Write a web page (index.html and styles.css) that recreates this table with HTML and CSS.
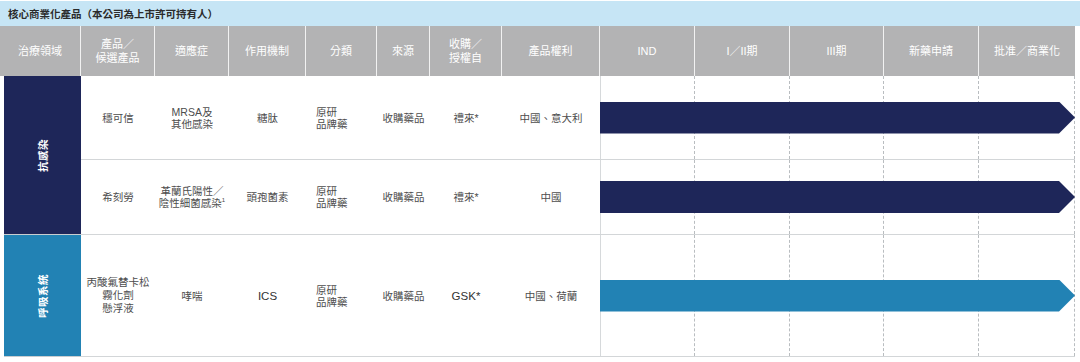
FILE: index.html
```html
<!DOCTYPE html>
<html lang="zh-Hant">
<head>
<meta charset="utf-8">
<title>核心商業化產品</title>
<link rel="stylesheet" href="styles.css">
</head>
<body>
<div class="page">
  <div class="titlebar">核心商業化產品（本公司為上市許可持有人）</div>
  <div class="table">
    <div class="th">治療領域</div>
    <div class="th">產品／<br>候選產品</div>
    <div class="th">適應症</div>
    <div class="th">作用機制</div>
    <div class="th">分類</div>
    <div class="th">來源</div>
    <div class="th">收購／<br>授權自</div>
    <div class="th">產品權利</div>
    <div class="th">IND</div>
    <div class="th">I／II期</div>
    <div class="th">III期</div>
    <div class="th">新藥申請</div>
    <div class="th last">批准／商業化</div>

    <div class="group navy span2"><span class="vtext">抗感染</span></div>
    <div class="td"><span>穩可信</span></div>
    <div class="td"><span>MRSA及<br>其他感染</span></div>
    <div class="td"><span>糖肽</span></div>
    <div class="td left"><span>原研<br>品牌藥</span></div>
    <div class="td"><span>收購藥品</span></div>
    <div class="td"><span>禮來*</span></div>
    <div class="td"><span>中國、意大利</span></div>
    <div class="stages">
      <div class="stage s1"></div><div class="stage s2"></div><div class="stage s3"></div><div class="stage s4"></div><div class="stage s5"></div>
      <div class="arrow arrow-navy"></div>
    </div>

    <div class="td"><span>希刻勞</span></div>
    <div class="td nowrap"><span>革蘭氏陽性／<br>陰性細菌感染<sup>1</sup></span></div>
    <div class="td"><span>頭孢菌素</span></div>
    <div class="td left"><span>原研<br>品牌藥</span></div>
    <div class="td"><span>收購藥品</span></div>
    <div class="td"><span>禮來*</span></div>
    <div class="td"><span>中國</span></div>
    <div class="stages">
      <div class="stage s1"></div><div class="stage s2"></div><div class="stage s3"></div><div class="stage s4"></div><div class="stage s5"></div>
      <div class="arrow arrow-navy"></div>
    </div>

    <div class="group blue"><span class="vtext">呼吸系統</span></div>
    <div class="td tall"><span>丙酸氟替卡松<br>霧化劑<br>懸浮液</span></div>
    <div class="td"><span>哮喘</span></div>
    <div class="td latin"><span>ICS</span></div>
    <div class="td left"><span>原研<br>品牌藥</span></div>
    <div class="td"><span>收購藥品</span></div>
    <div class="td latin"><span>GSK*</span></div>
    <div class="td"><span>中國、荷蘭</span></div>
    <div class="stages">
      <div class="stage s1"></div><div class="stage s2"></div><div class="stage s3"></div><div class="stage s4"></div><div class="stage s5"></div>
      <div class="arrow arrow-blue"></div>
    </div>
  </div>
</div>
</body>
</html>
```

FILE: styles.css
```css
* { box-sizing: border-box; }

html, body {
  margin: 0;
  padding: 0;
  background: #ffffff;
}

body {
  font-family: "Liberation Sans", "Noto Sans CJK TC", sans-serif;
  color: #4d4d4d;
}

.page {
  width: 1080px;
  height: 362px;
  padding-top: 1px;
}

.titlebar {
  height: 25px;
  background: #c6e5f5;
  font-size: 10.5px;
  font-weight: bold;
  color: #2b2b2b;
  padding-left: 8px;
  display: flex;
  align-items: center;
}

.table {
  width: 1075px;
  display: grid;
  grid-template-columns: 81px 74px 74px 77px 71px 53px 72px 98px 95px 95px 94px 95px 96px;
  grid-template-rows: 50px 84px 75px 122px;
}

.th {
  background: #b3b3b4;
  color: #ffffff;
  font-size: 11px;
  line-height: 14px;
  text-align: center;
  display: flex;
  align-items: center;
  justify-content: center;
  border-right: 1px solid #f2f2f2;
}

.th.last { border-right: none; }

.group {
  grid-column: 1;
  margin-left: 4px;
  display: flex;
  align-items: center;
  justify-content: center;
  border-bottom: 1px solid #c9cdd0;
}

.group.span2 { grid-row: span 2; }

.navy { background: #1e2659; }
.blue { background: #2282b4; }

.vtext {
  writing-mode: vertical-rl;
  text-orientation: sideways;
  transform: rotate(180deg);
  color: #ffffff;
  font-weight: bold;
  font-size: 10.5px;
  letter-spacing: 0.5px;
}

.td {
  font-size: 10.5px;
  line-height: 12px;
  text-align: center;
  display: flex;
  align-items: center;
  justify-content: center;
  border-bottom: 1px solid #d3d6d8;
  color: #4d4d4d;
}

.td.left {
  justify-content: flex-start;
  text-align: left;
  padding-left: 10px;
}

.td.tall { line-height: 13px; }

.td.nowrap { white-space: nowrap; }

.td.latin {
  font-size: 11.5px;
  color: #333333;
}

.td sup {
  font-size: 6px;
  line-height: 0;
  vertical-align: 5px;
}

.stages {
  grid-column: 9 / span 5;
  display: grid;
  grid-template-columns: 95px 95px 94px 95px 96px;
  grid-template-rows: 1fr;
  border-bottom: 1px solid #d3d6d8;
}

.stage {
  grid-row: 1;
  border-right: 1px dashed #b9bdc0;
}

.s1 { grid-column: 1; border-left: 1px solid #d6d9db; }
.s2 { grid-column: 2; }
.s3 { grid-column: 3; }
.s4 { grid-column: 4; }
.s5 { grid-column: 5; }

.arrow {
  grid-row: 1;
  grid-column: 1 / span 5;
  align-self: center;
  height: 32px;
  clip-path: polygon(0 0, calc(100% - 16px) 0, 100% 50%, calc(100% - 16px) 100%, 0 100%);
}

.arrow-navy { background: #1e2659; }
.arrow-blue { background: #2282b4; }
```
